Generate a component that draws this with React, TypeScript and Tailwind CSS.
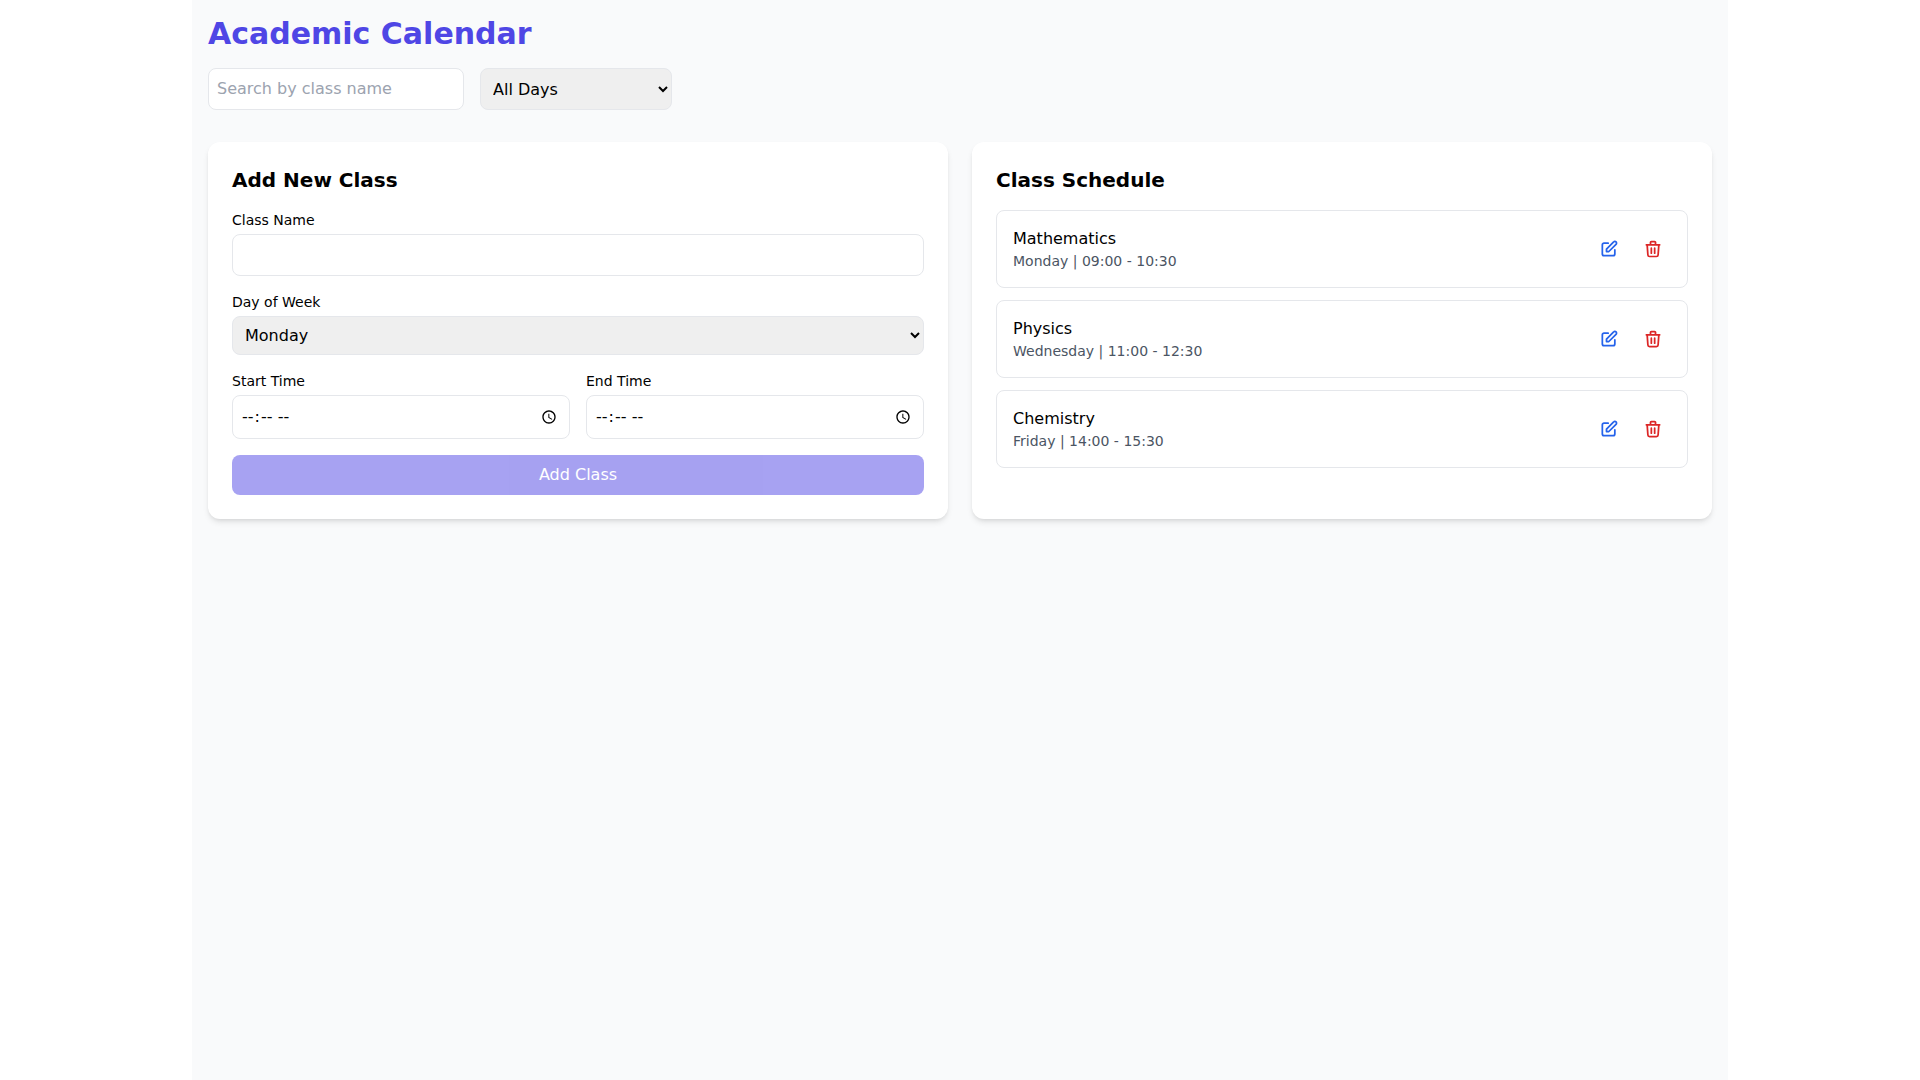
import { useState } from 'react';
import { HiOutlinePencilAlt, HiOutlineTrash } from 'react-icons/hi';

const days = ['Monday', 'Tuesday', 'Wednesday', 'Thursday', 'Friday'];

const classes = [
  { id: 1, name: 'Mathematics', day: 'Monday', start: '09:00', end: '10:30' },
  { id: 2, name: 'Physics', day: 'Wednesday', start: '11:00', end: '12:30' },
  { id: 3, name: 'Chemistry', day: 'Friday', start: '14:00', end: '15:30' },
];

export default function App() {
  const [search, setSearch] = useState('');
  const [filterDay, setFilterDay] = useState('All Days');
  const [name, setName] = useState('');
  const [day, setDay] = useState('Monday');
  const [start, setStart] = useState('');
  const [end, setEnd] = useState('');

  const visible = classes.filter(
    (c) =>
      c.name.toLowerCase().includes(search.toLowerCase()) &&
      (filterDay === 'All Days' || c.day === filterDay),
  );

  return (
    <div className="bg-white font-['DejaVu_Sans',sans-serif] text-black">
      <div className="mx-auto min-h-screen w-[1536px] bg-[#f9fafb] p-4">
        <h1 className="mb-4 text-3xl font-bold text-[#4f46e5]">Academic Calendar</h1>

        {/* Search and day filter */}
        <div className="mb-8 flex gap-4">
          <input
            type="text"
            placeholder="Search by class name"
            value={search}
            onChange={(e) => setSearch(e.target.value)}
            className="w-64 rounded-lg border border-[#e5e7eb] bg-white p-2 placeholder:text-[#9ca3af]"
          />
          <select
            value={filterDay}
            onChange={(e) => setFilterDay(e.target.value)}
            className="w-48 rounded-lg border border-[#e5e7eb] bg-[#efefef] p-2"
          >
            <option>All Days</option>
            {days.map((d) => (
              <option key={d}>{d}</option>
            ))}
          </select>
        </div>

        <div className="grid grid-cols-2 gap-6">
          {/* Add form */}
          <div className="rounded-xl bg-white p-6 shadow-md">
            <h2 className="mb-4 text-xl font-semibold">Add New Class</h2>
            <div className="space-y-4">
              <div>
                <label className="mb-1 block text-sm font-medium">Class Name</label>
                <input
                  type="text"
                  value={name}
                  onChange={(e) => setName(e.target.value)}
                  className="w-full rounded-lg border border-[#e5e7eb] bg-white p-2"
                />
              </div>
              <div>
                <label className="mb-1 block text-sm font-medium">Day of Week</label>
                <select
                  value={day}
                  onChange={(e) => setDay(e.target.value)}
                  className="w-full rounded-lg border border-[#e5e7eb] bg-[#efefef] p-2"
                >
                  {days.map((d) => (
                    <option key={d}>{d}</option>
                  ))}
                </select>
              </div>
              <div className="grid grid-cols-2 gap-4">
                <div>
                  <label className="mb-1 block text-sm font-medium">Start Time</label>
                  <input
                    type="time"
                    value={start}
                    onChange={(e) => setStart(e.target.value)}
                    className="h-11 w-full rounded-lg border border-[#e5e7eb] bg-white p-2"
                  />
                </div>
                <div>
                  <label className="mb-1 block text-sm font-medium">End Time</label>
                  <input
                    type="time"
                    value={end}
                    onChange={(e) => setEnd(e.target.value)}
                    className="h-11 w-full rounded-lg border border-[#e5e7eb] bg-white p-2"
                  />
                </div>
              </div>
              <button
                disabled={!name || !start || !end}
                className="w-full rounded-lg bg-[#4f46e5] py-2 text-white disabled:opacity-50"
              >
                Add Class
              </button>
            </div>
          </div>

          {/* Schedule list */}
          <div className="rounded-xl bg-white p-6 shadow-md">
            <h2 className="mb-4 text-xl font-semibold">Class Schedule</h2>
            <div className="space-y-3">
              {visible.map((c) => (
                <div
                  key={c.id}
                  className="flex items-center justify-between rounded-lg border border-[#e5e7eb] p-4"
                >
                  <div>
                    <h3 className="font-medium">{c.name}</h3>
                    <p className="text-sm text-[#4b5563]">
                      {c.day} | {c.start} - {c.end}
                    </p>
                  </div>
                  <div className="flex gap-2">
                    <button className="rounded-lg p-2 text-[#2563eb]">
                      <HiOutlinePencilAlt size={20} className="[&_path]:[stroke-width:2.1]" />
                    </button>
                    <button className="rounded-lg p-2 text-[#dc2626]">
                      <HiOutlineTrash size={20} className="[&_path]:[stroke-width:2.1]" />
                    </button>
                  </div>
                </div>
              ))}
            </div>
          </div>
        </div>
      </div>
    </div>
  );
}
